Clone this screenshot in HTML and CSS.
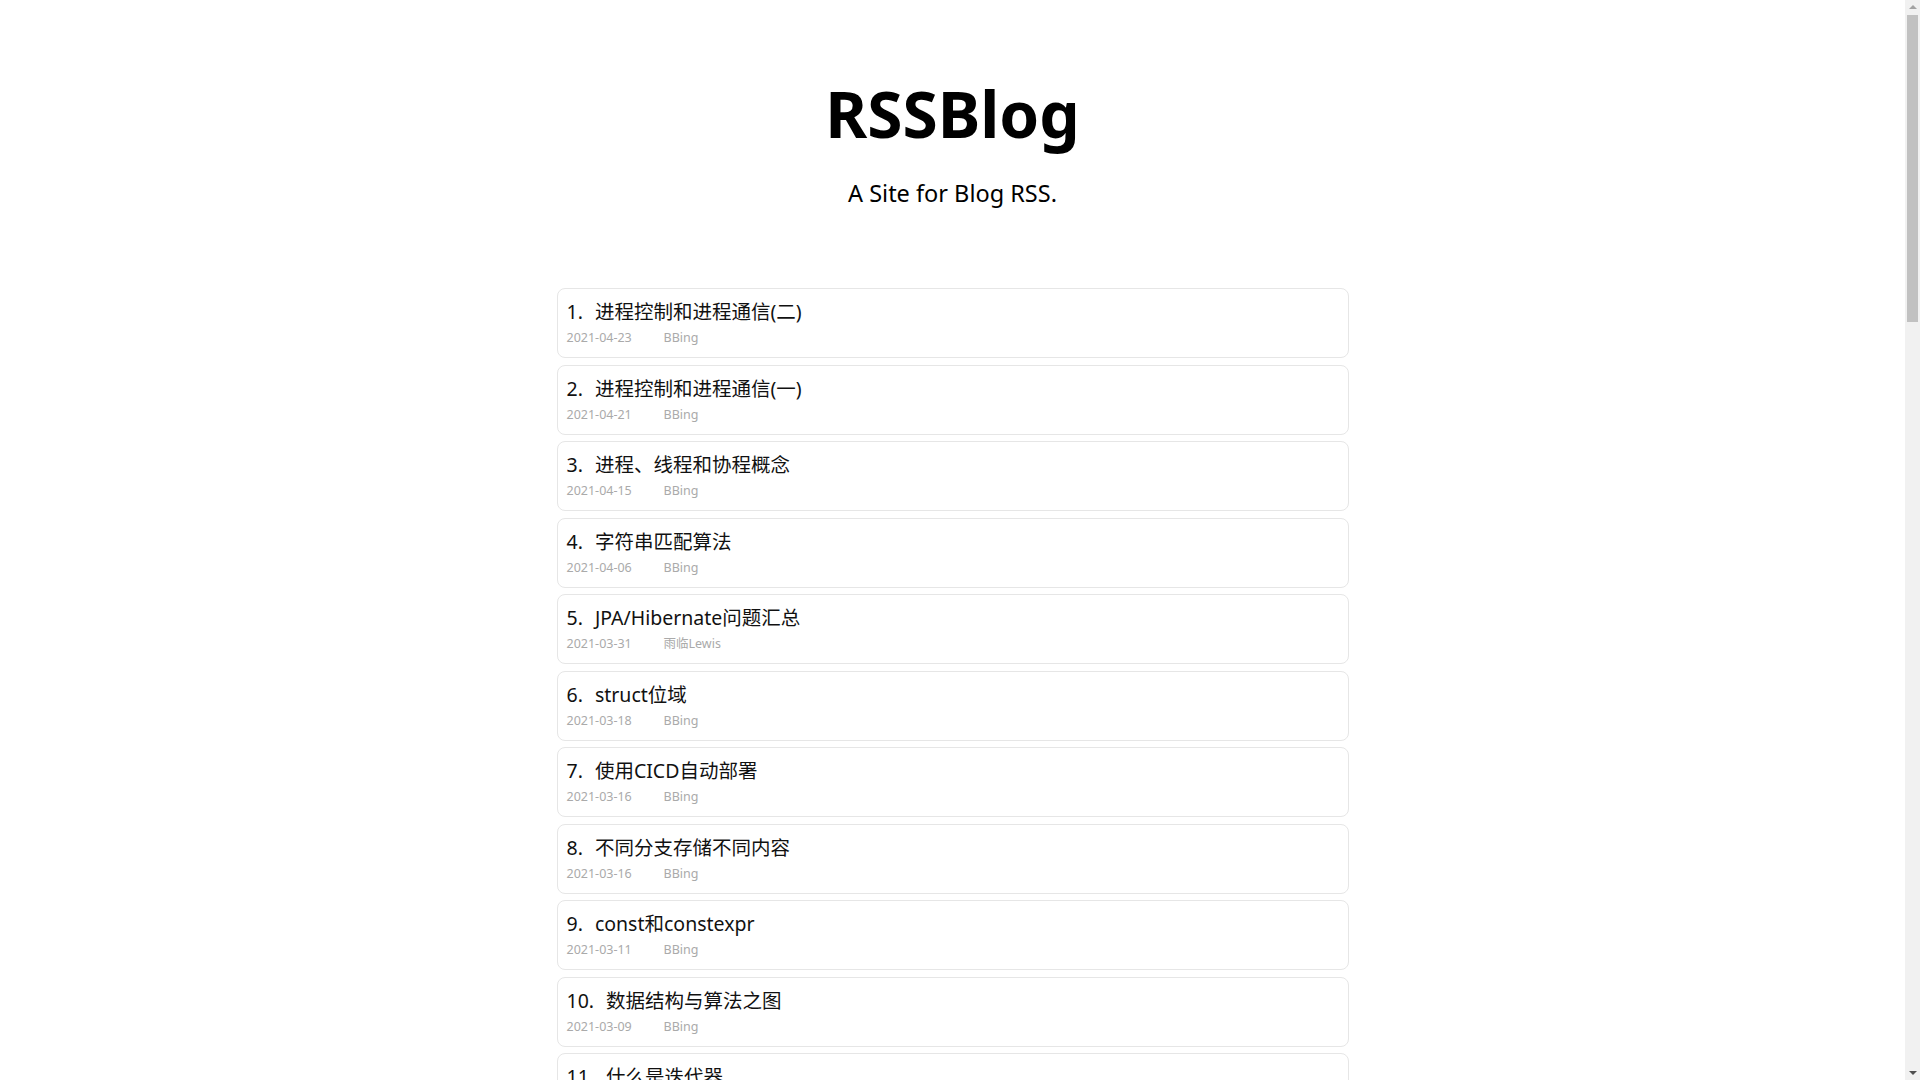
FILE: index.html
```html
<!DOCTYPE html>
<html lang="zh-CN">
<head>
<meta charset="utf-8">
<title>RSSBlog</title>
<link rel="stylesheet" href="styles.css">
</head>
<body>
<header class="site-header">
  <h1 class="site-title">RSSBlog</h1>
  <p class="site-desc">A Site for Blog RSS.</p>
</header>
<main class="post-list">
  <article class="post"><div class="post-title"><span class="num">1.</span>进程控制和进程通信(二)</div><div class="meta"><span class="date">2021-04-23</span><span class="author">BBing</span></div></article>
  <article class="post"><div class="post-title"><span class="num">2.</span>进程控制和进程通信(一)</div><div class="meta"><span class="date">2021-04-21</span><span class="author">BBing</span></div></article>
  <article class="post"><div class="post-title"><span class="num">3.</span>进程、线程和协程概念</div><div class="meta"><span class="date">2021-04-15</span><span class="author">BBing</span></div></article>
  <article class="post"><div class="post-title"><span class="num">4.</span>字符串匹配算法</div><div class="meta"><span class="date">2021-04-06</span><span class="author">BBing</span></div></article>
  <article class="post"><div class="post-title"><span class="num">5.</span>JPA/Hibernate问题汇总</div><div class="meta"><span class="date">2021-03-31</span><span class="author">雨临Lewis</span></div></article>
  <article class="post"><div class="post-title"><span class="num">6.</span>struct位域</div><div class="meta"><span class="date">2021-03-18</span><span class="author">BBing</span></div></article>
  <article class="post"><div class="post-title"><span class="num">7.</span>使用CICD自动部署</div><div class="meta"><span class="date">2021-03-16</span><span class="author">BBing</span></div></article>
  <article class="post"><div class="post-title"><span class="num">8.</span>不同分支存储不同内容</div><div class="meta"><span class="date">2021-03-16</span><span class="author">BBing</span></div></article>
  <article class="post"><div class="post-title"><span class="num">9.</span>const和constexpr</div><div class="meta"><span class="date">2021-03-11</span><span class="author">BBing</span></div></article>
  <article class="post"><div class="post-title"><span class="num">10.</span>数据结构与算法之图</div><div class="meta"><span class="date">2021-03-09</span><span class="author">BBing</span></div></article>
  <article class="post"><div class="post-title"><span class="num">11.</span>什么是迭代器</div><div class="meta"><span class="date">2021-03-05</span><span class="author">BBing</span></div></article>
  <article class="post"><div class="post-title"><span class="num">12.</span>数据结构与算法之树</div><div class="meta"><span class="date">2021-03-02</span><span class="author">BBing</span></div></article>
  <article class="post"><div class="post-title"><span class="num">13.</span>智能指针</div><div class="meta"><span class="date">2021-02-26</span><span class="author">BBing</span></div></article>
  <article class="post"><div class="post-title"><span class="num">14.</span>Spring Boot配置文件</div><div class="meta"><span class="date">2021-02-22</span><span class="author">雨临Lewis</span></div></article>
  <article class="post"><div class="post-title"><span class="num">15.</span>右值引用与移动语义</div><div class="meta"><span class="date">2021-02-18</span><span class="author">BBing</span></div></article>
  <article class="post"><div class="post-title"><span class="num">16.</span>数据结构与算法之排序</div><div class="meta"><span class="date">2021-02-10</span><span class="author">BBing</span></div></article>
  <article class="post"><div class="post-title"><span class="num">17.</span>虚函数与多态</div><div class="meta"><span class="date">2021-02-05</span><span class="author">BBing</span></div></article>
  <article class="post"><div class="post-title"><span class="num">18.</span>Docker常用命令</div><div class="meta"><span class="date">2021-01-30</span><span class="author">雨临Lewis</span></div></article>
  <article class="post"><div class="post-title"><span class="num">19.</span>Linux内存管理</div><div class="meta"><span class="date">2021-01-25</span><span class="author">BBing</span></div></article>
  <article class="post"><div class="post-title"><span class="num">20.</span>TCP三次握手与四次挥手</div><div class="meta"><span class="date">2021-01-20</span><span class="author">BBing</span></div></article>
  <article class="post"><div class="post-title"><span class="num">21.</span>Git使用技巧</div><div class="meta"><span class="date">2021-01-15</span><span class="author">BBing</span></div></article>
  <article class="post"><div class="post-title"><span class="num">22.</span>Redis持久化机制</div><div class="meta"><span class="date">2021-01-10</span><span class="author">雨临Lewis</span></div></article>
  <article class="post"><div class="post-title"><span class="num">23.</span>数据结构与算法之链表</div><div class="meta"><span class="date">2021-01-05</span><span class="author">BBing</span></div></article>
  <article class="post"><div class="post-title"><span class="num">24.</span>模板与泛型编程</div><div class="meta"><span class="date">2020-12-28</span><span class="author">BBing</span></div></article>
  <article class="post"><div class="post-title"><span class="num">25.</span>MySQL索引原理</div><div class="meta"><span class="date">2020-12-20</span><span class="author">雨临Lewis</span></div></article>
  <article class="post"><div class="post-title"><span class="num">26.</span>Lambda表达式</div><div class="meta"><span class="date">2020-12-14</span><span class="author">BBing</span></div></article>
  <article class="post"><div class="post-title"><span class="num">27.</span>文件系统概述</div><div class="meta"><span class="date">2020-12-08</span><span class="author">BBing</span></div></article>
  <article class="post"><div class="post-title"><span class="num">28.</span>Makefile入门</div><div class="meta"><span class="date">2020-12-01</span><span class="author">BBing</span></div></article>
  <article class="post"><div class="post-title"><span class="num">29.</span>HTTP协议详解</div><div class="meta"><span class="date">2020-11-25</span><span class="author">BBing</span></div></article>
  <article class="post"><div class="post-title"><span class="num">30.</span>Java并发编程基础</div><div class="meta"><span class="date">2020-11-18</span><span class="author">雨临Lewis</span></div></article>
  <article class="post"><div class="post-title"><span class="num">31.</span>数据结构与算法之哈希表</div><div class="meta"><span class="date">2020-11-10</span><span class="author">BBing</span></div></article>
  <article class="post"><div class="post-title"><span class="num">32.</span>STL容器总结</div><div class="meta"><span class="date">2020-11-03</span><span class="author">BBing</span></div></article>
  <article class="post"><div class="post-title"><span class="num">33.</span>进程调度算法</div><div class="meta"><span class="date">2020-10-27</span><span class="author">BBing</span></div></article>
  <article class="post"><div class="post-title"><span class="num">34.</span>Nginx配置笔记</div><div class="meta"><span class="date">2020-10-20</span><span class="author">雨临Lewis</span></div></article>
  <article class="post"><div class="post-title"><span class="num">35.</span>动态规划入门</div><div class="meta"><span class="date">2020-10-12</span><span class="author">BBing</span></div></article>
  <article class="post"><div class="post-title"><span class="num">36.</span>C++内存模型</div><div class="meta"><span class="date">2020-10-05</span><span class="author">BBing</span></div></article>
  <article class="post"><div class="post-title"><span class="num">37.</span>Vim配置与使用</div><div class="meta"><span class="date">2020-09-28</span><span class="author">BBing</span></div></article>
  <article class="post"><div class="post-title"><span class="num">38.</span>JVM垃圾回收</div><div class="meta"><span class="date">2020-09-20</span><span class="author">雨临Lewis</span></div></article>
  <article class="post"><div class="post-title"><span class="num">39.</span>Shell脚本基础</div><div class="meta"><span class="date">2020-09-12</span><span class="author">BBing</span></div></article>
  <article class="post"><div class="post-title"><span class="num">40.</span>Hello World</div><div class="meta"><span class="date">2020-09-01</span><span class="author">BBing</span></div></article>
</main>
<div class="scrollbar" aria-hidden="true">
  <span class="sb-arrow sb-up"></span>
  <span class="sb-thumb"></span>
  <span class="sb-arrow sb-down"></span>
</div>
</body>
</html>
```

FILE: styles.css
```css
html, body {
  margin: 0;
  padding: 0;
  background: #fff;
}
body {
  font-family: "Noto Sans", "Noto Sans CJK SC", sans-serif;
  color: #000;
  padding-right: 15px;
}
.site-header {
  display: flex;
  flex-direction: column;
  align-items: center;
  padding-top: 74px;
  padding-bottom: 80px;
}
.site-title {
  margin: 0;
  font-size: 64px;
  line-height: 80px;
  font-weight: 700;
}
.site-desc {
  margin: 24px 0 0;
  font-size: 23.5px;
  line-height: 30px;
}
.post-list {
  width: 792px;
  margin: 0 auto;
  display: flex;
  flex-direction: column;
  gap: 6.5px;
  padding-bottom: 60px;
}
.post {
  box-sizing: border-box;
  height: 70px;
  border: 1px solid #e6e6e6;
  border-radius: 8px;
  padding: 8px 9px 0;
}
.post-title {
  font-size: 19.5px;
  line-height: 30px;
  color: #111;
}
.num {
  margin-right: 12px;
}
.meta {
  display: flex;
  margin-top: 1px;
  font-size: 12.5px;
  line-height: 20px;
  color: #aaa;
}
.date {
  flex: 0 0 97px;
}

/* simulated browser scrollbar overlay */
.scrollbar {
  position: fixed;
  top: 0;
  right: 0;
  width: 15px;
  height: 100vh;
  background: #f1f1f1;
  display: flex;
  flex-direction: column;
  align-items: center;
}
.sb-arrow {
  width: 0;
  height: 0;
  border-left: 4px solid transparent;
  border-right: 4px solid transparent;
}
.sb-up {
  margin-top: 5px;
  border-bottom: 4px solid #a3a3a3;
}
.sb-thumb {
  margin-top: 6px;
  width: 11px;
  height: 307px;
  background: #c1c1c1;
}
.sb-down {
  margin-top: auto;
  margin-bottom: 5px;
  border-top: 4px solid #505050;
}
```
